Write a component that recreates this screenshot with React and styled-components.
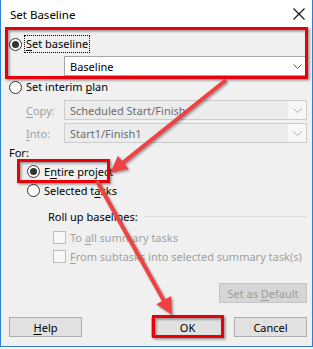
import React from "react";
import styled, { createGlobalStyle } from "styled-components";

const Global = createGlobalStyle`
  html, body { margin: 0; padding: 0; background: #ffffff; }
  body { font-family: "Noto Sans", "Open Sans", sans-serif; font-size: 11px; color: #000; }
  * { box-sizing: border-box; }
`;

const Dialog = styled.div`
  position: relative;
  width: 313px;
  height: 347px;
  border-left: 1px solid #2b7fd6;
  border-right: 1px solid #2b7fd6;
  border-bottom: 1px solid #2b7fd6;
  background: #f0f0f0;
  display: flex;
  flex-direction: column;
`;

const TitleBar = styled.div`
  height: 28px;
  background: #ffffff;
  display: flex;
  align-items: center;
  justify-content: space-between;
  padding: 0 6px 0 9px;
  font-size: 11.5px;
`;

const Close = styled.div`
  width: 14px;
  height: 14px;
  display: flex;
  align-items: center;
  justify-content: center;
`;

const Body = styled.div`
  flex: 1;
  display: flex;
  flex-direction: column;
  padding: 0 5px 0 8px;
`;

const Row = styled.div`
  height: ${(p) => p.h || 20}px;
  margin-top: ${(p) => p.mt || 0}px;
  padding-left: ${(p) => p.indent || 0}px;
  display: flex;
  align-items: center;
  white-space: nowrap;
`;

const RadioCircle = styled.span`
  width: 13px;
  height: 13px;
  border-radius: 50%;
  border: 1px solid #333;
  background: #fff;
  display: inline-flex;
  align-items: center;
  justify-content: center;
  margin-right: 2px;
  flex: none;
  &::after {
    content: "";
    width: 7px;
    height: 7px;
    border-radius: 50%;
    background: ${(p) => (p.checked ? "#333" : "transparent")};
  }
`;

const Label = styled.span`
  color: ${(p) => (p.disabled ? "#a0a0a0" : "#000")};
  padding: 1px 1px;
  border: 1px ${(p) => (p.focus ? "dotted #000" : "solid transparent")};
  line-height: 14px;
`;

const U = styled.span`
  text-decoration: underline;
  text-underline-offset: 2px;
`;

const Combo = styled.div`
  height: 20px;
  flex: 1;
  display: flex;
  align-items: center;
  border: 1px solid ${(p) => (p.disabled ? "#cccccc" : "#a6a6a6")};
  background: ${(p) => (p.disabled ? "#ececec" : "#ffffff")};
  color: ${(p) => (p.disabled ? "#6d6d6d" : "#000")};
  padding-left: 5px;
`;

const ComboText = styled.span`
  flex: 1;
`;

const Chevron = styled.span`
  width: 18px;
  height: 100%;
  display: flex;
  align-items: center;
  justify-content: center;
  background: ${(p) => (p.disabled ? "#f7f7f7" : "transparent")};
`;

const FieldLabel = styled.span`
  width: 38px;
  color: #a0a0a0;
`;

const GroupTitle = styled.span`
  margin-right: 4px;
`;

const Rule = styled.div`
  flex: 1;
  height: 1px;
  background: #dcdcdc;
  margin-left: 2px;
`;

const Check = styled.span`
  width: 13px;
  height: 13px;
  border: 1px solid #bcbcbc;
  background: #f7f7f7;
  margin-right: 2px;
  flex: none;
`;

const ButtonRow = styled.div`
  display: flex;
  justify-content: ${(p) => p.justify || "space-between"};
  margin-top: ${(p) => p.mt || 0}px;
  gap: 10px;
`;

const Button = styled.div`
  width: ${(p) => p.w || 73}px;
  height: 20px;
  display: flex;
  align-items: center;
  justify-content: center;
  white-space: pre;
  border: 1px solid ${(p) => (p.disabled ? "#c4c4c4" : "#adadad")};
  background: ${(p) => (p.disabled ? "#d6d6d6" : "#e1e1e1")};
  color: ${(p) => (p.disabled ? "#9a9a9a" : "#000")};
`;

const Spacer = styled.div`
  flex: 1;
`;

const Overlay = styled.svg`
  position: absolute;
  left: -1px;
  top: 0;
  width: 313px;
  height: 349px;
  pointer-events: none;
  overflow: visible;
`;

const ChevronIcon = ({ color = "#606060" }) => (
  <svg width="9" height="5" viewBox="0 0 9 5">
    <path d="M0.5 0.5 L4.5 4.5 L8.5 0.5" fill="none" stroke={color} strokeWidth="1" />
  </svg>
);

function arrowHead(tip, from, len, half) {
  const dx = tip[0] - from[0];
  const dy = tip[1] - from[1];
  const l = Math.hypot(dx, dy);
  const ux = dx / l;
  const uy = dy / l;
  const bx = tip[0] - ux * len;
  const by = tip[1] - uy * len;
  const px = -uy * half;
  const py = ux * half;
  return {
    pts: `${tip[0]},${tip[1]} ${bx + px},${by + py} ${bx - px},${by - py}`,
    base: [tip[0] - ux * (len - 2), tip[1] - uy * (len - 2)],
  };
}

const Arrow = ({ from, tip }) => {
  const h = arrowHead(tip, from, 17, 8.5);
  return (
    <g>
      <g transform="translate(1.5,1.5)" opacity="0.35" filter="url(#blur)">
        <line x1={from[0]} y1={from[1]} x2={h.base[0]} y2={h.base[1]} stroke="#000" strokeWidth="4" />
        <polygon points={h.pts} fill="#000" />
      </g>
      <line x1={from[0]} y1={from[1]} x2={h.base[0]} y2={h.base[1]} stroke="#ef4245" strokeWidth="4" />
      <polygon points={h.pts} fill="#ef4245" />
    </g>
  );
};

const RedBox = ({ x, y, w, h }) => (
  <g>
    <rect x={x + 1.5} y={y + 1.5} width={w} height={h} fill="none" stroke="#000" strokeWidth="3" opacity="0.4" filter="url(#blur)" />
    <rect x={x} y={y} width={w} height={h} fill="none" stroke="#e8000b" strokeWidth="3" />
  </g>
);

export default function App() {
  return (
    <>
      <Global />
      <Dialog>
        <TitleBar>
          <span>Set Baseline</span>
          <Close>
            <svg width="12" height="12" viewBox="0 0 12 12">
              <path d="M0.5 0.5 L11.5 11.5 M11.5 0.5 L0.5 11.5" stroke="#111" strokeWidth="1.1" />
            </svg>
          </Close>
        </TitleBar>
        <Body>
          <Row mt={6}>
            <RadioCircle checked />
            <Label focus>
              <U>S</U>et baseline
            </Label>
          </Row>
          <Row mt={2} indent={55}>
            <Combo>
              <ComboText>Baseline</ComboText>
              <Chevron>
                <ChevronIcon />
              </Chevron>
            </Combo>
          </Row>
          <Row mt={1}>
            <RadioCircle />
            <Label>
              Set interim <U>p</U>lan
            </Label>
          </Row>
          <Row mt={3} indent={17}>
            <FieldLabel>
              <U>C</U>opy:
            </FieldLabel>
            <Combo disabled>
              <ComboText>Scheduled Start/Finish</ComboText>
              <Chevron disabled>
                <ChevronIcon color="#b0b0b0" />
              </Chevron>
            </Combo>
          </Row>
          <Row mt={3} indent={17}>
            <FieldLabel>
              <U>I</U>nto:
            </FieldLabel>
            <Combo disabled>
              <ComboText>Start1/Finish1</ComboText>
              <Chevron disabled>
                <ChevronIcon color="#b0b0b0" />
              </Chevron>
            </Combo>
          </Row>
          <Row h={19}>For:</Row>
          <Row h={19} indent={18}>
            <RadioCircle checked />
            <Label>
              E<U>n</U>tire project
            </Label>
          </Row>
          <Row h={19} indent={18}>
            <RadioCircle />
            <Label>
              Selected t<U>a</U>sks
            </Label>
          </Row>
          <Row mt={6} indent={39}>
            <GroupTitle>Roll up baselines:</GroupTitle>
            <Rule />
          </Row>
          <Row mt={2} h={19} indent={44}>
            <Check />
            <Label disabled>
              To <U>a</U>ll summary tasks
            </Label>
          </Row>
          <Row h={19} indent={44}>
            <Check />
            <Label disabled>
              <U>F</U>rom subtasks into selected summary task(s)
            </Label>
          </Row>
          <ButtonRow mt={17} justify="flex-end">
            <Button disabled w={88}>
              <span>
                Set as <U>D</U>efault
              </span>
            </Button>
          </ButtonRow>
          <ButtonRow mt={14}>
            <Button w={73}>
              <span>
                <U>H</U>elp
              </span>
            </Button>
            <Spacer />
            <Button w={73}>OK</Button>
            <Button w={73}>Cancel</Button>
          </ButtonRow>
        </Body>
        <Overlay viewBox="0 0 313 349">
          <defs>
            <filter id="blur" x="-20%" y="-20%" width="140%" height="140%">
              <feGaussianBlur stdDeviation="1" />
            </filter>
          </defs>
          <RedBox x={6.5} y={28.5} w={300} h={49} />
          <RedBox x={18.5} y={160.5} w={90} h={21} />
          <RedBox x={153.5} y={316.5} w={69} h={20} />
          <Arrow from={[226, 80]} tip={[110, 173]} />
          <Arrow from={[97, 181]} tip={[172, 315]} />
        </Overlay>
      </Dialog>
    </>
  );
}
